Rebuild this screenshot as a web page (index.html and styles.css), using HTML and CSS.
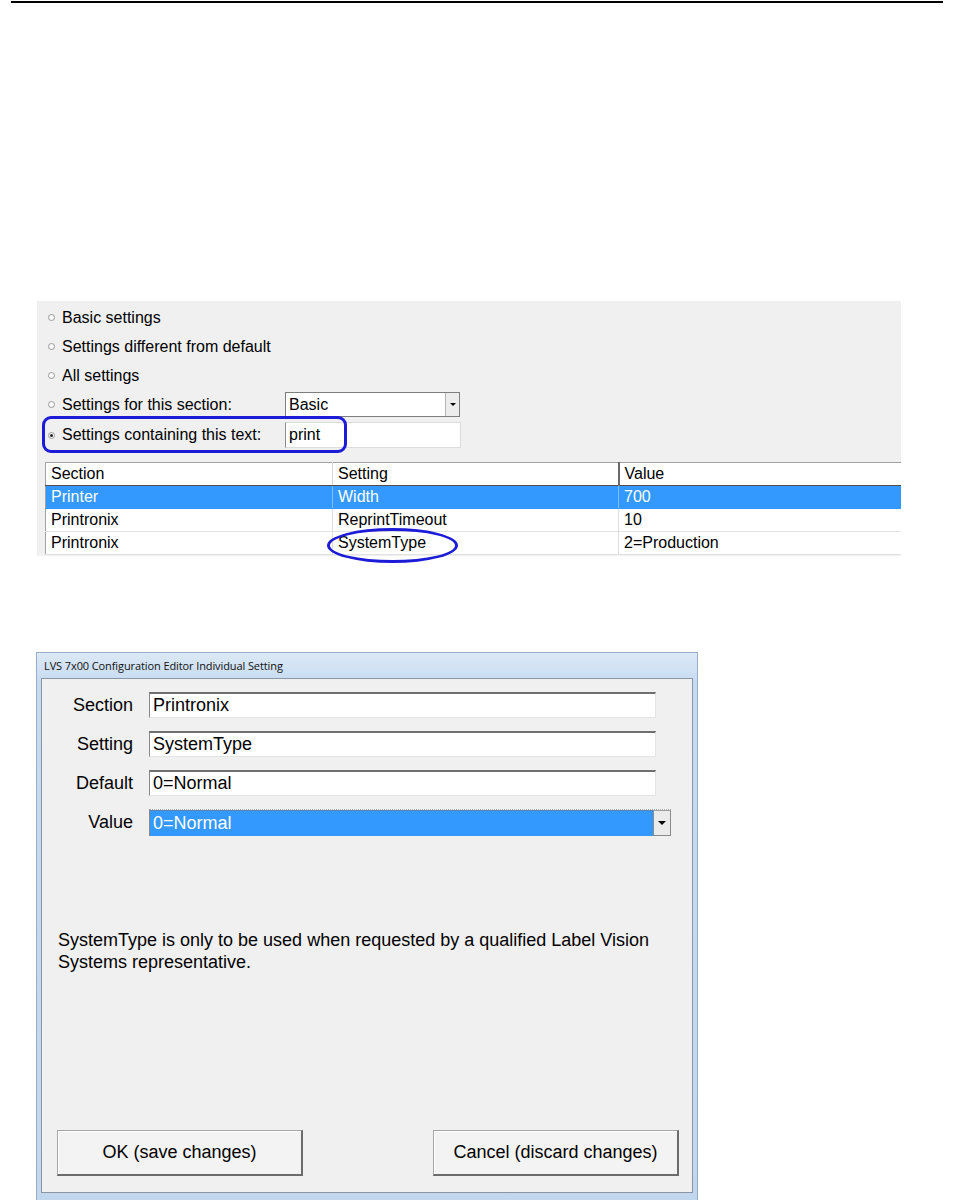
FILE: index.html
```html
<!DOCTYPE html>
<html>
<head>
    <meta charset="UTF-8">
    <title>LVS 7x00 Configuration Editor</title>
    <link rel="stylesheet" href="styles.css">
</head>
<body>

    <div class="rule"></div>

    <div class="settings">
        <div class="filter">
            <div class="opt"><span class="radio"></span>Basic settings</div>
            <div class="opt"><span class="radio"></span>Settings different from default</div>
            <div class="opt"><span class="radio"></span>All settings</div>
            <div class="opt">
                <span class="radio"></span>
                <span class="opt-label">Settings for this section:</span>
                <div class="combo"><span class="combo-text">Basic</span><span class="combo-btn"><i class="caret"></i></span></div>
            </div>
            <div class="opt tall">
                <span class="radio on"></span>
                <span class="opt-label">Settings containing this text:</span>
                <div class="field">print</div>
            </div>
        </div>

        <div class="grid-wrap">
            <table class="grid">
                <colgroup>
                    <col class="c1"><col class="c2"><col class="c3">
                </colgroup>
                <tr><th>Section</th><th>Setting</th><th>Value</th></tr>
                <tr class="selected"><td>Printer</td><td>Width</td><td>700</td></tr>
                <tr><td>Printronix</td><td>ReprintTimeout</td><td>10</td></tr>
                <tr><td>Printronix</td><td>SystemType</td><td>2=Production</td></tr>
            </table>
        </div>

        <div class="mark-box"></div>
        <div class="mark-ellipse"></div>
    </div>

    <div class="dialog">
        <div class="titlebar">LVS 7x00 Configuration Editor Individual Setting</div>
        <div class="client">
            <div class="form">
                <div class="form-row">
                    <span class="form-label">Section</span>
                    <div class="input">Printronix</div>
                </div>
                <div class="form-row">
                    <span class="form-label">Setting</span>
                    <div class="input">SystemType</div>
                </div>
                <div class="form-row">
                    <span class="form-label">Default</span>
                    <div class="input">0=Normal</div>
                </div>
                <div class="form-row">
                    <span class="form-label">Value</span>
                    <div class="select">
                        <span class="select-text">0=Normal</span>
                        <span class="select-btn"><i class="caret"></i></span>
                    </div>
                </div>
            </div>

            <p class="note">SystemType is only to be used when requested by a qualified Label Vision Systems representative.</p>

            <div class="buttons">
                <div class="btn">OK (save changes)</div>
                <div class="btn">Cancel (discard changes)</div>
            </div>
        </div>
    </div>

</body>
</html>
```

FILE: styles.css
```css
body {
    margin: 0;
    background: #fff;
    color: #000;
    font-family: "Liberation Sans", Arial, sans-serif;
    font-size: 16px;
}
.rule {
    height: 2px;
    margin: 1px 12px 0 11px;
    background: #000;
}

/* first screenshot: filter options + results grid */
.settings {
    position: relative;
    width: 864px;
    height: 255px;
    margin: 298px 0 0 37px;
    background: #f0f0f0;
}
.filter {
    padding: 2px 0 0 11px;
}
.opt {
    display: flex;
    align-items: center;
    height: 29px;
}
.opt.tall {
    height: 32px;
}
.radio {
    position: relative;
    width: 7px;
    height: 7px;
    margin-right: 7px;
    box-sizing: border-box;
    border: 1px solid #9a9a9a;
    border-radius: 50%;
    background: #fbfbfb;
    flex: none;
}
.radio.on::after {
    content: "";
    position: absolute;
    left: 1px;
    top: 1px;
    width: 3px;
    height: 3px;
    border-radius: 50%;
    background: #222;
}
.opt-label {
    width: 223px;
}
.combo {
    display: flex;
    width: 175px;
    height: 25px;
    box-sizing: border-box;
    border: 1px solid #7e7e7e;
    background: #fff;
}
.combo-text {
    flex: 1;
    padding-left: 3px;
    line-height: 23px;
}
.combo-btn {
    display: flex;
    align-items: center;
    justify-content: center;
    width: 13px;
    border-left: 1px solid #b5b5b5;
    background: #ececec;
}
.caret {
    width: 0;
    height: 0;
    border-left: 3px solid transparent;
    border-right: 3px solid transparent;
    border-top: 3px solid #000;
}
.field {
    width: 176px;
    height: 26px;
    box-sizing: border-box;
    padding-left: 3px;
    line-height: 24px;
    border: 1px solid #dcdcdc;
    border-left-color: #8c8c8c;
    background: #fff;
}
.grid-wrap {
    width: 856px;
    height: 94px;
    margin: 11px 0 0 8px;
    overflow: hidden;
}
.grid {
    width: 920px;
    border-collapse: collapse;
    table-layout: fixed;
}
.grid .c1 { width: 287px; }
.grid .c2 { width: 286px; }
.grid .c3 { width: 347px; }
.grid th {
    height: 22px;
    padding: 0 5px;
    text-align: left;
    font-weight: normal;
    line-height: 22px;
    background: #fff;
    border-top: 1px solid #a3a3a3;
    border-left: 1px solid #a3a3a3;
    border-right: 1px solid #d6d6d6;
    border-bottom: 1px solid #4e4e4e;
}
.grid th:nth-child(2) {
    border-right: 2px solid #6a6a6a;
}
.grid td {
    height: 22px;
    padding: 0 5px;
    line-height: 22px;
    white-space: nowrap;
    background: #fff;
    border-left: 1px solid #a3a3a3;
    border-right: 1px solid #dedede;
    border-bottom: 1px solid #e2e2e2;
}
.grid td + td {
    border-left: none;
}
.grid .selected td {
    background: #3399ff;
    color: #fff;
    border-right-color: #7cbcff;
    border-bottom-color: #3399ff;
}
.mark-box {
    position: absolute;
    left: 5px;
    top: 115px;
    width: 305px;
    height: 37px;
    box-sizing: border-box;
    border: 3px solid #1c1cd8;
    border-radius: 9px;
}
.mark-ellipse {
    position: absolute;
    left: 290px;
    top: 227px;
    width: 131px;
    height: 35px;
    box-sizing: border-box;
    border: 3px solid #1c1cd8;
    border-radius: 50%;
}

/* second screenshot: the individual setting dialog */
.dialog {
    width: 662px;
    margin: 96px 0 0 36px;
    padding: 0 4px 7px;
    box-sizing: border-box;
    border: 1px solid #98adc8;
    border-bottom: none;
    background: linear-gradient(to bottom, #dce9f6, #c6daf0 30px, #c2d6ed);
}
.titlebar {
    height: 25px;
    padding-left: 3px;
    line-height: 25px;
    font-family: "Open Sans", "Liberation Sans", sans-serif;
    font-size: 11px;
    letter-spacing: -0.1px;
    color: #111;
}
.client {
    display: flex;
    flex-direction: column;
    height: 515px;
    box-sizing: border-box;
    border: 1px solid #8896a8;
    background: #f0f0f0;
    font-size: 18px;
}
.form {
    display: flex;
    flex-direction: column;
    gap: 13px;
    padding-top: 13px;
}
.form-row {
    display: flex;
    align-items: center;
    height: 26px;
}
.form-label {
    width: 91px;
    margin-right: 16px;
    text-align: right;
}
.input {
    width: 507px;
    height: 26px;
    box-sizing: border-box;
    padding-left: 3px;
    line-height: 23px;
    background: #fff;
    border-top: 2px solid #6f6f6f;
    border-left: 1px solid #8a8a8a;
    border-right: 1px solid #e4e4e4;
    border-bottom: 1px solid #e4e4e4;
}
.select {
    display: flex;
    width: 522px;
    height: 27px;
    box-sizing: border-box;
    border-top: 1px dotted #a8a8a8;
    border-left: 1px solid #8a8a8a;
    background: #fff;
}
.select-text {
    flex: 1;
    padding-left: 3px;
    line-height: 24px;
    color: #fff;
    background: #3399ff;
    border-top: 1px solid #5a84b5;
}
.select-btn {
    display: flex;
    align-items: center;
    justify-content: center;
    width: 16px;
    border: 1px solid #8a8a8a;
    border-top-color: #a0a0a0;
    background: #ebebeb;
}
.select-btn .caret {
    border-left-width: 4px;
    border-right-width: 4px;
    border-top-width: 4px;
}
.note {
    margin: 94px 20px 0 16px;
    line-height: 22px;
}
.buttons {
    display: flex;
    justify-content: space-between;
    margin-top: auto;
    padding: 0 13px 16px 15px;
}
.btn {
    width: 246px;
    height: 46px;
    box-sizing: border-box;
    text-align: center;
    line-height: 43px;
    background: #f3f3f3;
    border: 1px solid #a5a5a5;
    border-right: 2px solid #6b6b6b;
    border-bottom: 2px solid #6b6b6b;
    box-shadow: inset 1px 1px 0 #fff;
}
```
